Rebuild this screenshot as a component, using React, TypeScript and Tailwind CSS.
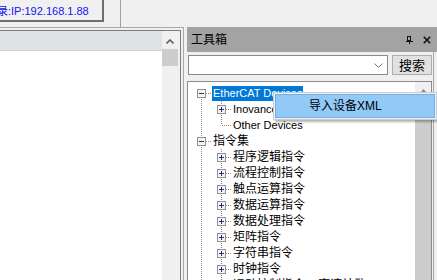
import React from 'react'

type Cell = 'blank' | 'pipe' | 'tee' | 'ell' | 'first'

type Row = {
  label: string
  cells: Cell[]
  box?: 'plus' | 'minus'
  latin?: boolean
  selected?: boolean
  clip?: boolean
}

const ROWS: Row[] = [
  { label: 'EtherCAT Devices', cells: ['first'], box: 'minus', latin: true, selected: true },
  { label: 'Inovance', cells: ['pipe', 'tee'], box: 'plus', latin: true, clip: true },
  { label: 'Other Devices', cells: ['pipe', 'ell'], latin: true },
  { label: '指令集', cells: ['tee'], box: 'minus' },
  { label: '程序逻辑指令', cells: ['pipe', 'tee'], box: 'plus' },
  { label: '流程控制指令', cells: ['pipe', 'tee'], box: 'plus' },
  { label: '触点运算指令', cells: ['pipe', 'tee'], box: 'plus' },
  { label: '数据运算指令', cells: ['pipe', 'tee'], box: 'plus' },
  { label: '数据处理指令', cells: ['pipe', 'tee'], box: 'plus' },
  { label: '矩阵指令', cells: ['pipe', 'tee'], box: 'plus' },
  { label: '字符串指令', cells: ['pipe', 'tee'], box: 'plus' },
  { label: '时钟指令', cells: ['pipe', 'tee'], box: 'plus' },
  { label: '运动控制指令    高速计数', cells: ['pipe', 'tee'], box: 'plus' },
]

// one 20x16 gutter cell of the tree: dotted guide lines and the +/- box
function Gutter({ kind, box }: { kind: Cell; box?: 'plus' | 'minus' }) {
  const dot = { stroke: '#8f8f8f', strokeWidth: 1, strokeDasharray: '1 1', shapeRendering: 'crispEdges' as const }
  return (
    <svg width="20" height="16" viewBox="0 0 20 16" className="shrink-0">
      {(kind === 'pipe' || kind === 'tee') && <line x1="9.5" y1="0" x2="9.5" y2="16" {...dot} />}
      {kind === 'ell' && <line x1="9.5" y1="0" x2="9.5" y2="8" {...dot} />}
      {kind === 'first' && <line x1="9.5" y1="8" x2="9.5" y2="16" {...dot} />}
      {kind !== 'pipe' && kind !== 'blank' && <line x1="10" y1="8.5" x2="20" y2="8.5" {...dot} />}
      {box && (
        <g shapeRendering="crispEdges">
          <rect x="5.5" y="4.5" width="8" height="8" fill="#f4f4f4" stroke="#919191" />
          <line x1="7" y1="8.5" x2="12" y2="8.5" stroke="#1c2f6e" />
          {box === 'plus' && <line x1="9.5" y1="6" x2="9.5" y2="11" stroke="#1c2f6e" />}
        </g>
      )}
    </svg>
  )
}

export default function App() {
  return (
    <div className="relative w-[437px] h-[280px] overflow-hidden bg-[#f0f0f0] font-['Liberation_Sans','Noto_Sans_CJK_SC',sans-serif] text-black flex flex-col">
      {/* top bar */}
      <div className="h-[27px] flex shrink-0">
        <div className="w-[121px] border-r border-[#a0a0a0]">
          <div className="w-[104px] h-[22px] border-r-2 border-b-2 border-[#6e6e6e] flex items-center overflow-hidden pt-[3px]">
            <span className="-ml-[3px] text-[11px] text-[#1414f0] whitespace-nowrap leading-none">录:IP:192.168.1.88</span>
          </div>
        </div>
      </div>

      <div className="flex flex-1 min-h-0">
        {/* left panel */}
        <div className="w-[184px] border-t border-r border-[#a8a8a8] pt-[2px] pr-[2px] flex">
          <div className="flex-1 border-t border-r border-[#7d7d7d] flex pr-[2px]">
            <div className="flex-1 flex flex-col bg-white">
              <div className="h-[20px] bg-[#dce4e4] border-b border-[#cfd4d4]" />
            </div>
            <div className="w-[16px] bg-[#f0f0f0] flex flex-col">
              <div className="h-[18px] flex items-center justify-center pt-[2px]">
                <svg width="8" height="5" viewBox="0 0 8 5">
                  <polyline points="0.5,4.5 4,1 7.5,4.5" fill="none" stroke="#606060" strokeWidth="1.6" />
                </svg>
              </div>
              <div className="h-[17px] bg-[#cdcdcd]" />
            </div>
          </div>
        </div>

        <div className="w-[3px]" />

        {/* toolbox panel */}
        <div className="flex-1 flex flex-col min-w-0">
          <div className="h-[25px] bg-[#a3a3a3] flex items-center pl-[4px] pr-[6px] shrink-0">
            <span className="text-[12px] leading-none flex-1">工具箱</span>
            <svg width="7" height="8" viewBox="0 0 7 8" className="mr-[10px]" shapeRendering="crispEdges">
              <rect x="1.5" y="0.5" width="3" height="4" fill="none" stroke="#111" />
              <line x1="4" y1="0" x2="4" y2="5" stroke="#111" strokeWidth="1" />
              <line x1="0" y1="5.5" x2="7" y2="5.5" stroke="#111" />
              <line x1="3.5" y1="5" x2="3.5" y2="8" stroke="#111" />
            </svg>
            <svg width="8" height="8" viewBox="0 0 8 8">
              <path d="M0.8 0.8 L7.2 7.2 M7.2 0.8 L0.8 7.2" stroke="#111" strokeWidth="1.6" />
            </svg>
          </div>

          <div className="flex-1 flex flex-col mr-[3px] border-r border-[#a8a8a8] min-h-0">
            <div className="mt-[3px] flex shrink-0">
              <div className="ml-[1px] w-[200px] h-[20px] bg-white border border-[#8a8a8a] flex items-center justify-end pr-[4px]">
                <svg width="9" height="5" viewBox="0 0 9 5">
                  <polyline points="0.5,0.5 4.5,4.5 8.5,0.5" fill="none" stroke="#707070" strokeWidth="1" />
                </svg>
              </div>
              <button className="ml-[4px] w-[40px] h-[20px] bg-[#e1e1e1] border border-[#adadad] text-[13px] leading-none flex items-center justify-center">
                搜索
              </button>
            </div>

            <div className="mt-[6px] w-[245px] flex-1 flex border-t border-l border-r border-[#8c8c8c] bg-white min-h-0">
              <div className="flex-1 pt-[3px] pl-[4px] overflow-hidden">
                {ROWS.map((r) => (
                  <div key={r.label} className="h-[16px] flex items-center">
                    {r.cells.map((c, i) => (
                      <Gutter key={i} kind={c} box={i === r.cells.length - 1 ? r.box : undefined} />
                    ))}
                    <span
                      className={`h-[15px] px-[1px] flex items-center whitespace-pre leading-none ${
                        r.latin ? 'text-[11px]' : 'text-[12px]'
                      } ${r.selected ? 'bg-[#0078d7] text-white' : ''} ${r.clip ? 'max-w-[41px] overflow-hidden' : ''}`}
                    >
                      {r.label}
                    </span>
                  </div>
                ))}
              </div>
              <div className="w-[16px] bg-[#f0f0f0] flex flex-col">
                <div className="h-[17px] flex items-center justify-center">
                  <svg width="7" height="4" viewBox="0 0 7 4">
                    <polygon points="0,4 3.5,0 7,4" fill="#8a8a8a" />
                  </svg>
                </div>
                <div className="flex-1 bg-[#cdcdcd]" />
              </div>
            </div>
          </div>
        </div>
      </div>

      {/* context menu */}
      <div className="absolute left-[273px] top-[92px] w-[164px] h-[28px] bg-[#f2f2f2] border border-[#cccccc] shadow-[2px_2px_2px_rgba(0,0,0,0.3)] p-[1px]">
        <div className="h-full bg-[#91c9f7] border border-[#70b0e8] flex items-center pl-[33px] text-[12px] leading-none">
          导入设备XML
        </div>
      </div>
    </div>
  )
}
